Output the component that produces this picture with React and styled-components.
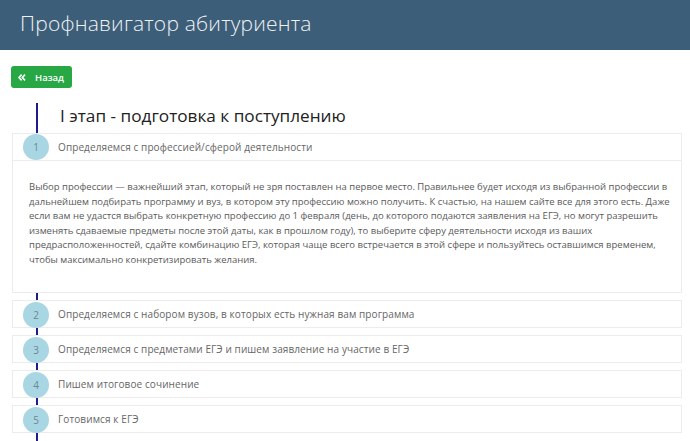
import React from "react";
import styled, { createGlobalStyle } from "styled-components";

const GlobalStyle = createGlobalStyle`
  html, body {
    margin: 0;
    padding: 0;
    background: #ffffff;
  }
  body {
    font-family: "Open Sans", "Liberation Sans", sans-serif;
  }
`;

const Header = styled.header`
  height: 50px;
  background-color: #3d5e78;
  display: flex;
  align-items: center;
  padding: 0 0 4px 20px;
  box-sizing: border-box;
`;

const HeaderTitle = styled.h1`
  margin: 0;
  font-family: "Open Sans", "Liberation Sans", sans-serif;
  font-weight: 300;
  font-size: 21px;
  letter-spacing: 0.2px;
  color: #eef2f5;
`;

const Main = styled.main`
  padding: 16px 8px 0 12px;
`;

const BackButton = styled.button`
  display: flex;
  align-items: center;
  gap: 9px;
  height: 22px;
  padding: 0 8px 0 7px;
  margin-left: -1px;
  border: none;
  border-radius: 3px;
  background-color: #28a745;
  color: #ffffff;
  font-family: "Open Sans", "Liberation Sans", sans-serif;
  font-weight: 600;
  font-size: 9.5px;
  cursor: pointer;
`;

const Timeline = styled.div`
  position: relative;
  margin-top: 15px;
  padding-bottom: 8px;
`;

const Line = styled.div`
  position: absolute;
  left: 24px;
  top: 0;
  bottom: 0;
  width: 2px;
  background-color: #1c1c8c;
  z-index: 0;
`;

const StageTitle = styled.h2`
  position: relative;
  margin: 0;
  height: 30px;
  padding-left: 48px;
  font-family: "Open Sans", "Liberation Sans", sans-serif;
  font-weight: 400;
  font-size: 17.2px;
  line-height: 25px;
  color: #222;
`;

const Card = styled.section`
  position: relative;
  z-index: 1;
  background: #ffffff;
  border: 1px solid #ececec;
  margin-bottom: 7px;
`;

const CardHead = styled.div`
  display: flex;
  align-items: center;
  height: 26px;
  padding-left: 10px;
  gap: 9px;
  border-bottom: ${p => (p.open ? "1px solid #ececec" : "none")};
`;

const Circle = styled.span`
  flex: none;
  width: 26px;
  height: 26px;
  border-radius: 50%;
  background-color: #a9d6e3;
  color: #6a8893;
  font-size: 10px;
  display: flex;
  align-items: center;
  justify-content: center;
  position: relative;
  top: ${p => (p.open ? "0" : "1px")};
`;

const CardTitle = styled.span`
  font-family: "Open Sans", "Liberation Sans", sans-serif;
  font-size: 10px;
  color: #666;
  letter-spacing: 0.1px;
`;

const CardBody = styled.div`
  padding: 19px 6px 25px 16px;
`;

const Paragraph = styled.p`
  margin: 0;
  font-family: "Open Sans", "Liberation Sans", sans-serif;
  font-size: 9.5px;
  line-height: 14.5px;
  color: #5a5a5a;
`;

const steps = [
  "Определяемся с профессией/сферой деятельности",
  "Определяемся с набором вузов, в которых есть нужная вам программа",
  "Определяемся с предметами ЕГЭ и пишем заявление на участие в ЕГЭ",
  "Пишем итоговое сочинение",
  "Готовимся к ЕГЭ",
];

const text =
  "Выбор профессии — важнейший этап, который не зря поставлен на первое место. Правильнее будет исходя из выбранной профессии в дальнейшем подбирать программу и вуз, в котором эту профессию можно получить. К счастью, на нашем сайте все для этого есть. Даже если вам не удастся выбрать конкретную профессию до 1 февраля (день, до которого подаются заявления на ЕГЭ, но могут разрешить изменять сдаваемые предметы после этой даты, как в прошлом году), то выберите сферу деятельности исходя из ваших предрасположенностей, сдайте комбинацию ЕГЭ, которая чаще всего встречается в этой сфере и пользуйтесь оставшимся временем, чтобы максимально конкретизировать желания.";

const App = () => (
  <>
    <GlobalStyle />
    <Header>
      <HeaderTitle>Профнавигатор абитуриента</HeaderTitle>
    </Header>
    <Main>
      <BackButton>
        <svg width="8" height="7" viewBox="0 0 8 7" fill="none" stroke="#fff" strokeWidth="1.6">
          <path d="M3.6 0.6 L1 3.5 L3.6 6.4 M7 0.6 L4.4 3.5 L7 6.4" />
        </svg>
        Назад
      </BackButton>
      <Timeline>
        <Line />
        <StageTitle>I этап - подготовка к поступлению</StageTitle>
        {steps.map((s, i) => (
          <Card key={i}>
            <CardHead open={i === 0}>
              <Circle open={i === 0}>{i + 1}</Circle>
              <CardTitle>{s}</CardTitle>
            </CardHead>
            {i === 0 && (
              <CardBody>
                <Paragraph>{text}</Paragraph>
              </CardBody>
            )}
          </Card>
        ))}
      </Timeline>
    </Main>
  </>
);

export default App;
